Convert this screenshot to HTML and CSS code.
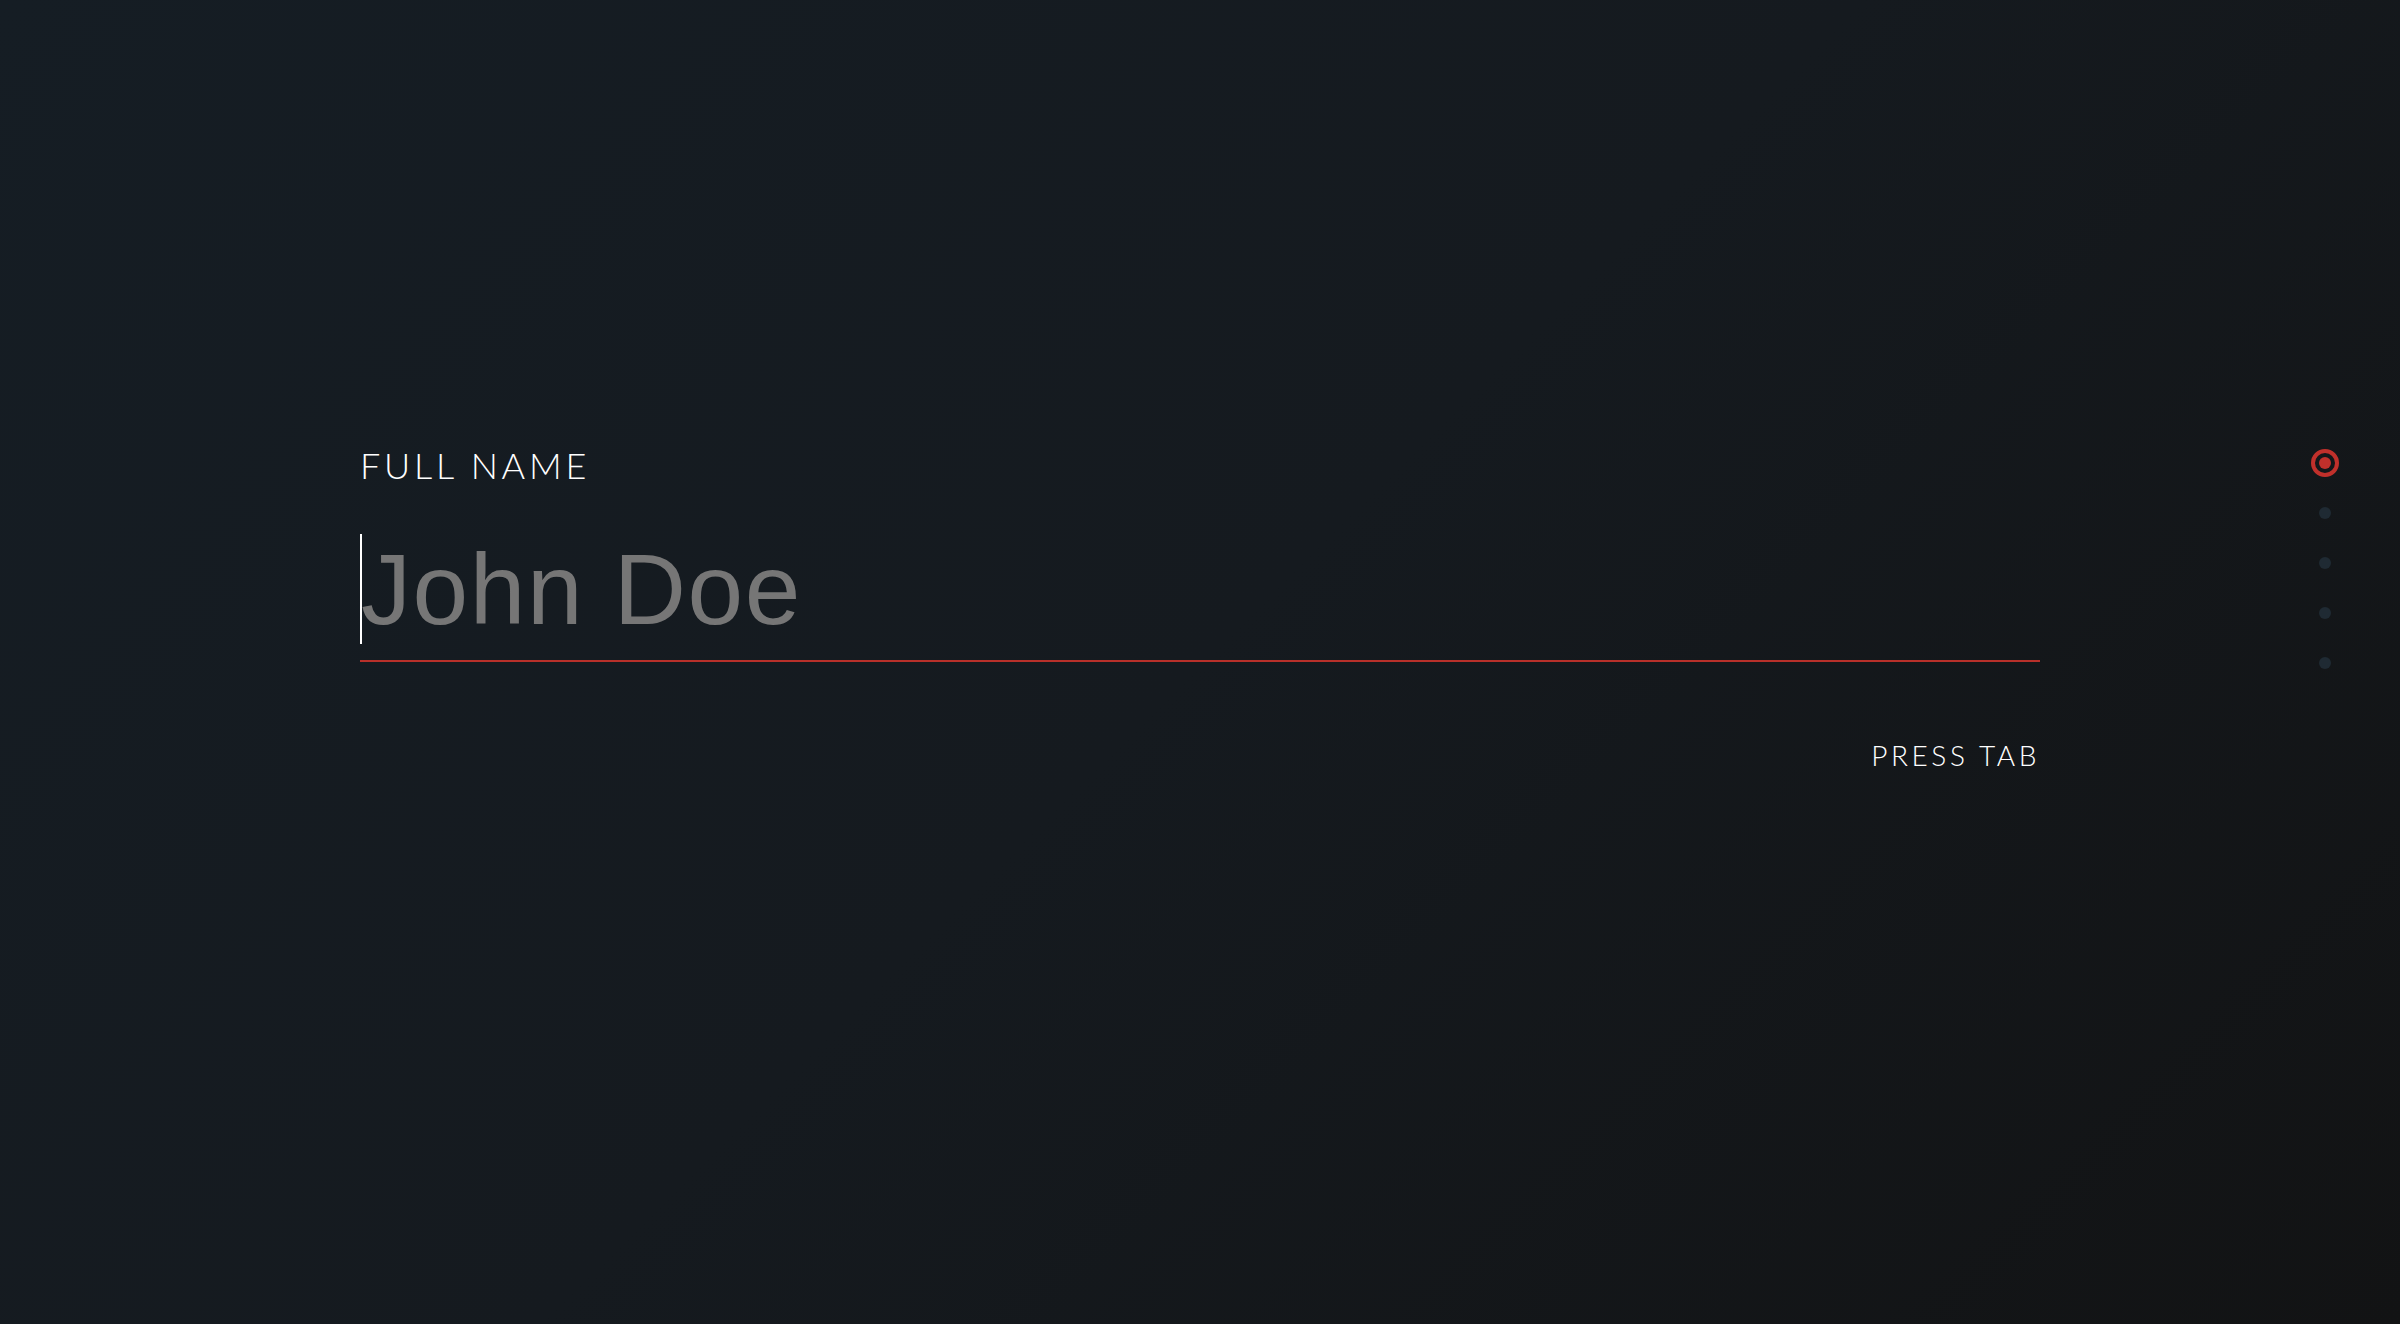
FILE: index.html
```html
<!DOCTYPE html>
<html lang="en">
<head>
<meta charset="utf-8">
<title>Full name</title>
<link rel="stylesheet" href="styles.css">
</head>
<body>
<main class="page">
  <form class="form">
    <label class="label" for="name">FULL NAME</label>
    <div class="field" id="name">
      <span class="caret"></span><span class="placeholder">John Doe</span>
    </div>
    <div class="hint">PRESS TAB</div>
  </form>
  <nav class="steps">
    <span class="step step-active"><span class="step-core"></span></span>
    <span class="step"></span>
    <span class="step"></span>
    <span class="step"></span>
    <span class="step"></span>
  </nav>
</main>
</body>
</html>
```
FILE: styles.css
```css
html, body {
  margin: 0;
  padding: 0;
  height: 100%;
}
body {
  background: linear-gradient(135deg, #151d24 0%, #151a1f 50%, #121314 100%);
  font-family: Lato, "Liberation Sans", sans-serif;
  overflow: hidden;
}
.page {
  position: relative;
  height: 1324px;
  padding-top: 443px;
  box-sizing: border-box;
}
.form {
  margin-left: 360px;
  width: 1680px;
  display: flex;
  flex-direction: column;
}
.label {
  display: block;
  color: #ffffff;
  font-size: 36px;
  line-height: 44px;
  font-weight: 300;
  letter-spacing: 3.8px;
}
.field {
  margin-top: 46px;
  display: flex;
  align-items: center;
  height: 112px;
  padding-bottom: 15px;
  border-bottom: 2px solid #b8302a;
}
.caret {
  width: 2px;
  height: 110px;
  background: #ffffff;
}
.placeholder {
  font-family: "Liberation Sans", Arial, sans-serif;
  font-size: 100px;
  line-height: 112px;
  color: #767676;
  letter-spacing: 1.6px;
  margin-left: -1px;
}
.hint {
  margin-top: 76px;
  align-self: flex-end;
  color: #ffffff;
  font-size: 28px;
  line-height: 34px;
  font-weight: 300;
  letter-spacing: 3.6px;
}
.steps {
  position: absolute;
  right: 61px;
  top: 449px;
  width: 28px;
  display: flex;
  flex-direction: column;
  align-items: center;
  gap: 38px;
}
.step {
  width: 12px;
  height: 12px;
  border-radius: 50%;
  background: #1f2a33;
  display: flex;
  align-items: center;
  justify-content: center;
}
.step-active {
  width: 28px;
  height: 28px;
  box-sizing: border-box;
  border: 4px solid #c0302b;
  background: transparent;
  margin-bottom: -8px;
}
.step-core {
  width: 12px;
  height: 12px;
  border-radius: 50%;
  background: #c0302b;
}
```
